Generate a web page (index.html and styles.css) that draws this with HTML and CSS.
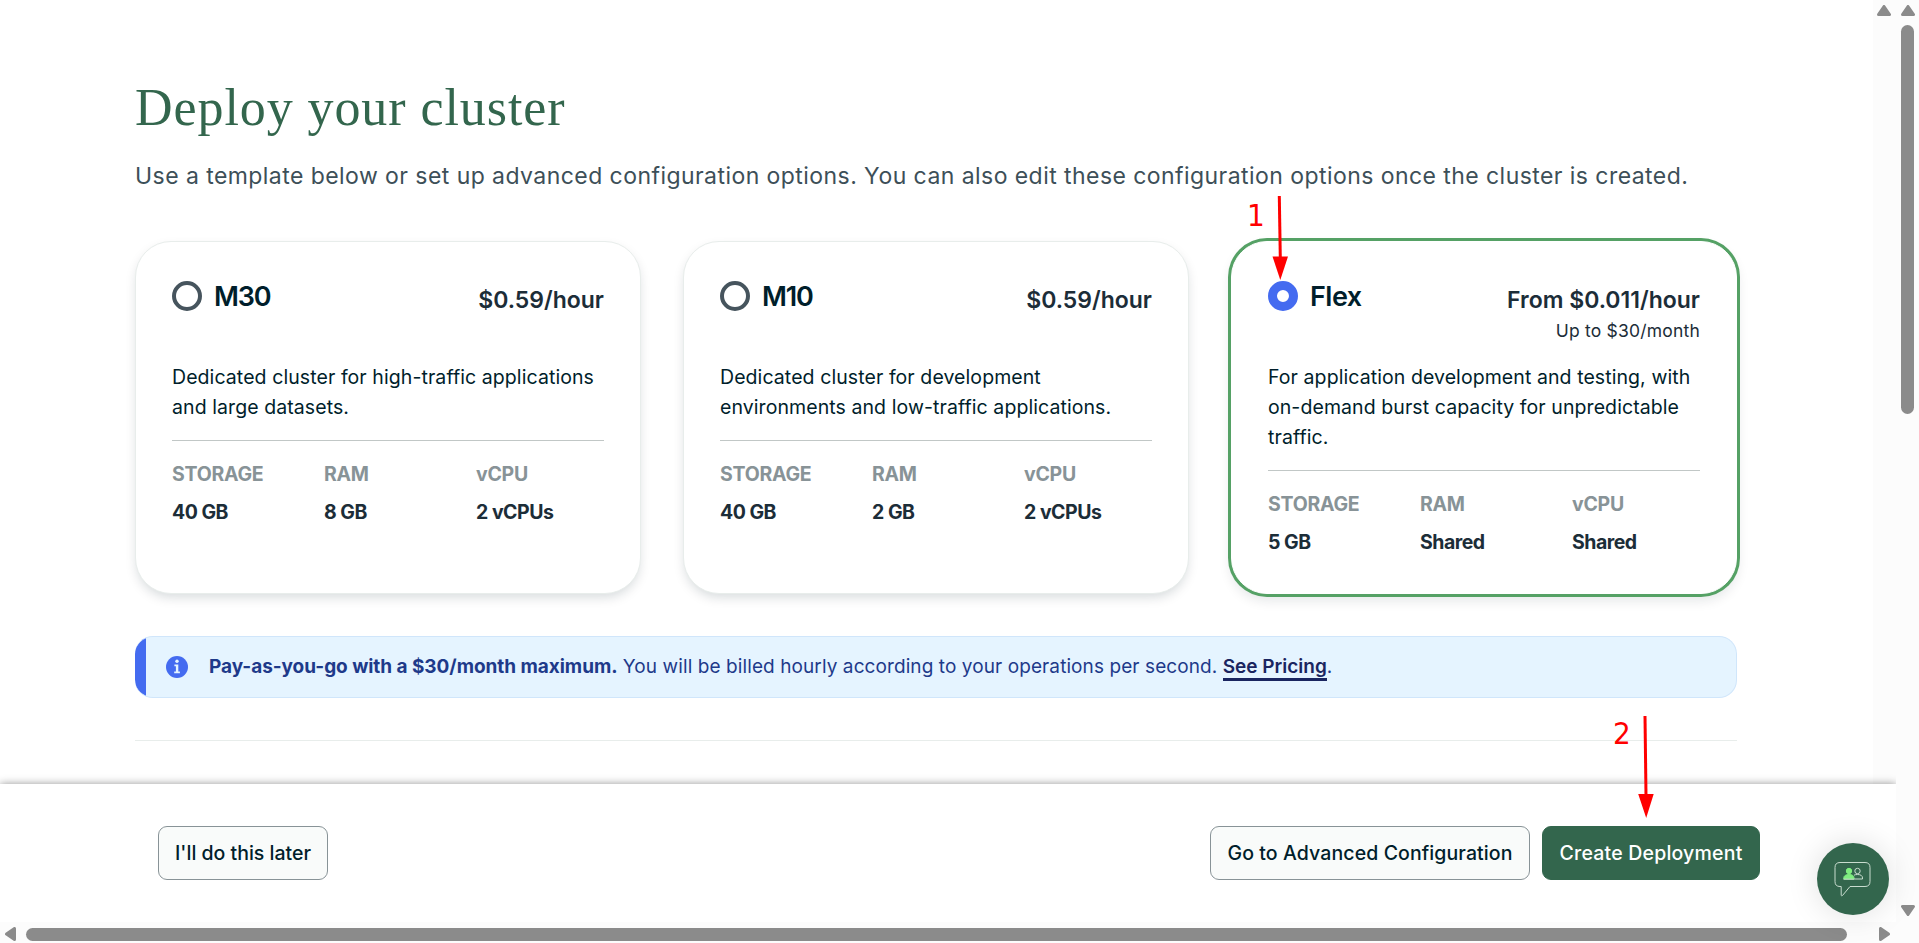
FILE: index.html
```
<!DOCTYPE html>
<html lang="en">
<head>
<meta charset="utf-8">
<title>Deploy your cluster</title>
<link rel="stylesheet" href="styles.css">
</head>
<body>
<div class="window">
  <div class="view">
    <div class="scroll-area">
      <main class="main">
        <h1 class="heading">Deploy your cluster</h1>
        <p class="lead">Use a template below or set up advanced configuration options. You can also edit these configuration options once the cluster is created.</p>
        <div class="cards">
          <section class="card">
            <div class="card-head">
              <span class="radio"></span>
              <h2 class="card-title tight">M30</h2>
              <div class="price">$0.59/hour</div>
            </div>
            <p class="desc">Dedicated cluster for high-traffic applications<br>and large datasets.</p>
            <dl class="stats">
              <div><dt>STORAGE</dt><dd>40 GB</dd></div>
              <div><dt>RAM</dt><dd>8 GB</dd></div>
              <div><dt>vCPU</dt><dd>2 vCPUs</dd></div>
            </dl>
          </section>
          <section class="card">
            <div class="card-head">
              <span class="radio"></span>
              <h2 class="card-title tight">M10</h2>
              <div class="price">$0.59/hour</div>
            </div>
            <p class="desc">Dedicated cluster for development<br>environments and low-traffic applications.</p>
            <dl class="stats">
              <div><dt>STORAGE</dt><dd>40 GB</dd></div>
              <div><dt>RAM</dt><dd>2 GB</dd></div>
              <div><dt>vCPU</dt><dd>2 vCPUs</dd></div>
            </dl>
          </section>
          <section class="card selected">
            <div class="card-head">
              <span class="radio checked"></span>
              <h2 class="card-title">Flex</h2>
              <div class="price">From $0.011/hour<small class="price-note">Up to $30/month</small></div>
            </div>
            <p class="desc">For application development and testing, with<br>on-demand burst capacity for unpredictable<br>traffic.</p>
            <dl class="stats">
              <div><dt>STORAGE</dt><dd>5 GB</dd></div>
              <div><dt>RAM</dt><dd>Shared</dd></div>
              <div><dt>vCPU</dt><dd>Shared</dd></div>
            </dl>
          </section>
        </div>
        <div class="banner">
          <svg class="info" viewBox="0 0 22 22" width="22" height="22">
            <circle cx="11" cy="11" r="11" fill="#446bf0"/>
            <circle cx="11" cy="5.3" r="1.7" fill="#e4f4ff"/>
            <path d="M8.4 8.6h3.9v7h1.6v1.7H8.2v-1.7h1.7v-5.3H8.4z" fill="#e4f4ff"/>
          </svg>
          <p class="banner-text"><b>Pay-as-you-go with a $30/month maximum.</b> <span class="banner-copy">You will be billed hourly according to your operations per second.</span> <a class="link">See Pricing</a>.</p>
        </div>
        <hr class="rule">
      </main>
      <div class="track inner-track">
        <svg width="14" height="11" viewBox="0 0 14 11"><path d="M7 1.500 12.500 9.500h-11z"/></svg>
      </div>
    </div>
    <footer class="footer">
      <button class="btn">I'll do this later</button>
      <div class="actions">
        <button class="btn btn-adv">Go to Advanced Configuration</button>
        <button class="btn primary">Create Deployment</button>
      </div>
    </footer>
  </div>
  <div class="track outer-track">
    <svg width="14" height="11" viewBox="0 0 14 11"><path d="M7 1.500 12.500 9.500h-11z"/></svg>
    <div class="thumb"></div>
    <svg class="arrow-down" width="14" height="11" viewBox="0 0 14 11"><path d="M7 9.500 1.500 1.500h11z"/></svg>
  </div>
  <div class="track bottom-track">
    <svg width="11" height="14" viewBox="0 0 11 14"><path d="M1.500 7 9.500 1.500v11z"/></svg>
    <div class="thumb-x"></div>
    <svg width="11" height="14" viewBox="0 0 11 14"><path d="M9.500 7 1.500 1.500v11z"/></svg>
  </div>
  <div class="chat">
    <svg width="38" height="36" viewBox="0 0 38 36" fill="none">
      <path d="M6 1.5h25q5 0 5 5v14q0 5-5 5H16l-7.500 9c-.6.700-1.300.4-1.300-.4v-8.600H6q-5 0-5-5v-14q0-5 5-5z" stroke="#c9dccf" stroke-width="1"/>
      <g stroke-width="1" stroke="#7fee80" fill="#7fee80"><circle cx="15" cy="10" r="2.700"/><path d="M9.800 18v-1c0-2.300 2-3.500 5.200-3.500s5 1.200 5 3.500v1z"/></g>
      <g stroke-width="1" stroke="#c9dccf"><circle cx="23.500" cy="10" r="2.700"/><path d="M20 14.200c1-.5 2.100-.7 3.500-.7 3.200 0 5 1.200 5 3.500v1H20"/><path d="M9.500 18.200h10.500"/></g>
    </svg>
  </div>
  <span class="mark mark-one">1</span>
  <svg class="pointer pointer-one" width="18" height="84" viewBox="0 0 18 84"><path d="M8.300 0 9.300 62" stroke="red" stroke-width="3"/><path d="M1.500 60.500h15.500L9.300 84z" fill="red"/></svg>
  <span class="mark mark-two">2</span>
  <svg class="pointer pointer-two" width="18" height="102" viewBox="0 0 18 102"><path d="M8 0 9 79" stroke="red" stroke-width="3"/><path d="M1.200 78h15.500L9.200 102z" fill="red"/></svg>
</div>
</body>
</html>
```
FILE: styles.css
```
* { box-sizing: border-box; }
body {
  margin: 0;
  background: #fff;
  color: #001e2b;
  font-family: Inter, "Liberation Sans", sans-serif;
  overflow: hidden;
}
h1, h2, p, dl, dd { margin: 0; }

.window {
  position: relative;
  display: grid;
  grid-template: 922px 21px / 1896px 23px;
  width: 1919px;
  height: 943px;
}
.view {
  display: grid;
  grid-template-rows: 784px 138px;
  background: #fff;
}
.scroll-area {
  display: grid;
  grid-template-columns: 1fr 23px;
}

.main { padding: 78px 136px 0 135px; }
.heading {
  font: 400 52px/60px "Liberation Serif", serif;
  letter-spacing: .92px;
  color: #33664d;
}
.lead {
  margin-top: 22px;
  font-size: 23px;
  line-height: 32px;
  letter-spacing: .44px;
  color: #3d4f58;
  white-space: nowrap;
}

.cards {
  display: grid;
  grid-template-columns: repeat(3, 1fr);
  gap: 42px;
  margin-top: 49px;
}
.card {
  padding: 36px 36px 39px;
  border: 1px solid #e8edeb;
  border-radius: 36px;
  background: #fff;
  box-shadow: 0 5px 12px -2px rgba(0, 30, 43, .17);
}
.selected {
  border-color: #fff;
  box-shadow: 0 0 0 3px #55a165, 0 6px 12px 1px rgba(0, 30, 43, .1);
}
.card-head {
  display: flex;
  height: 84px;
  padding-top: 3px;
}
.radio {
  width: 30px;
  height: 30px;
  margin-right: 12px;
  border: 4px solid #46545d;
  border-radius: 50%;
}
.checked { border: 9px solid #446bf0; }
.card-title {
  padding-top: 1px;
  font-size: 27px;
  font-weight: 600;
  line-height: 30px;
  letter-spacing: -.5px;
}
.tight { letter-spacing: -1.2px; }
.price {
  margin: 4px 0 0 auto;
  font-size: 23px;
  font-weight: 600;
  line-height: 30px;
  color: #1c2d38;
  text-align: right;
}
.price-note {
  display: block;
  margin-top: 2px;
  font-size: 17.5px;
  font-weight: 400;
  line-height: 28px;
  letter-spacing: .2px;
}
.desc {
  font-size: 19.5px;
  line-height: 30px;
  letter-spacing: .08px;
  white-space: nowrap;
}
.stats {
  display: grid;
  grid-template-columns: repeat(3, 1fr);
  gap: 24px;
  margin-top: 18px;
  padding-top: 21px;
  border-top: 1px solid #c1c7c6;
  font-size: 19.5px;
  font-weight: 700;
  line-height: 24px;
  letter-spacing: -.4px;
  white-space: nowrap;
}
.stats dt { margin-bottom: 14px; color: #889397; letter-spacing: -.25px; }
.stats dd { color: #1c2d38; letter-spacing: -.5px; }

.banner {
  display: flex;
  align-items: center;
  height: 62px;
  margin-top: 42px;
  padding-left: 30px;
  border: 1px solid #d0e6fb;
  border-radius: 18px;
  background: linear-gradient(to right, #446bf0 11px, #e5f4ff 11px) border-box;
  border-left: 0;
  color: #1e3a8a;
}
.info { margin: 0 21px 0 1px; }
.banner-text {
  font-size: 19px;
  line-height: 30px;
  white-space: nowrap;
}
.banner-text b { font-weight: 700; letter-spacing: -.05px; }
.banner-copy { letter-spacing: .09px; }
.link {
  border-bottom: 3px solid #1a2560;
  font-weight: 600;
  color: #1a2560;
}
.rule {
  height: 1px;
  margin: 42px 0 0;
  border: 0;
  background: #e8edeb;
}

.footer {
  position: relative;
  display: flex;
  justify-content: space-between;
  padding: 42px 136px 0 158px;
  background: #fff;
  box-shadow: 0 0 8px rgba(0, 0, 0, .42);
}
.actions { display: flex; gap: 12px; }
.btn {
  width: 170px;
  height: 54px;
  padding: 0;
  border: 1px solid #889397;
  border-radius: 9px;
  background: #f9fbfa;
  color: #001e2b;
  font: 500 19.500px/30px Inter, sans-serif;
}
.btn-adv { width: 320px; letter-spacing: .1px; }
.primary {
  width: 218px;
  border-color: #33664d;
  background: #33664d;
  color: #fff;
  letter-spacing: .2px;
}

.track { position: relative; background: #fcfcfc; }
.track svg { fill: #8b8b8b; stroke: #8b8b8b; stroke-width: 3; stroke-linejoin: round; }
.inner-track { padding: 5px 0 0 4px; line-height: 0; }
.outer-track {
  display: flex;
  flex-direction: column;
  padding: 5px 0 6px 5px;
}
.thumb {
  width: 13px;
  height: 389px;
  margin-top: 9px;
  border-radius: 7px;
  background: #8b8b8b;
}
.arrow-down { margin-top: auto; }
.bottom-track {
  grid-column: 1 / 3;
  display: flex;
  align-items: center;
  padding: 5px 29px 2px 5px;
}
.thumb-x {
  width: 1821px;
  height: 13px;
  margin: 0 auto 0 10px;
  border-radius: 7px;
  background: #8b8b8b;
}

.chat {
  position: absolute;
  left: 1817px;
  top: 843px;
  display: grid;
  place-items: center;
  width: 72px;
  height: 72px;
  border-radius: 50%;
  background: #33664d;
  box-shadow: 0 0 32px rgba(0, 0, 0, .13);
}

.mark {
  position: absolute;
  font: 31px/36px "DejaVu Sans Condensed", "DejaVu Sans", sans-serif;
  color: red;
}
.mark-one { left: 1247px; top: 197px; }
.mark-two { left: 1613px; top: 715px; }
.pointer { position: absolute; }
.pointer-one { left: 1271px; top: 196px; }
.pointer-two { left: 1637px; top: 716px; }
```
